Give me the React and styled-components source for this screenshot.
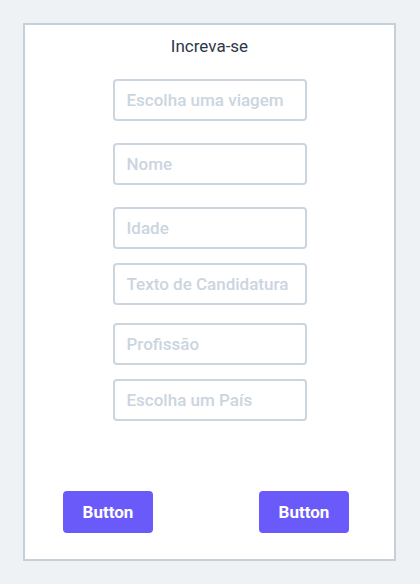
import styled, { createGlobalStyle } from "styled-components";

const GlobalStyle = createGlobalStyle`
  body {
    margin: 0;
    background-color: #eff2f5;
    font-family: Roboto, "Liberation Sans", sans-serif;
  }
`;

const Page = styled.div`
  padding: 23px;
`;

const Card = styled.div`
  display: flex;
  flex-direction: column;
  align-items: center;
  box-sizing: border-box;
  width: 373px;
  height: 538px;
  background-color: #ffffff;
  border: 2px solid #c5d0db;
`;

const Title = styled.div`
  margin-top: 10px;
  font-size: 17px;
  line-height: 22px;
  color: #2d3748;
`;

const Form = styled.div`
  display: flex;
  flex-direction: column;
  margin-top: 22px;
`;

const Input = styled.input`
  box-sizing: border-box;
  width: 194px;
  height: 42px;
  margin-top: ${({ gap }) => gap}px;
  padding: 0 12px;
  border: 2px solid #cbd5e0;
  border-radius: 4px;
  font-family: Roboto, "Liberation Sans", sans-serif;
  font-size: 17px;
  font-weight: 500;
  color: #2d3748;
  outline: none;

  &::placeholder {
    color: #cbd5e0;
  }
`;

const ButtonRow = styled.div`
  display: flex;
  justify-content: space-between;
  align-self: stretch;
  margin-top: auto;
  margin-bottom: 26px;
  padding: 0 45px 0 38px;
`;

const Button = styled.button`
  width: 90px;
  height: 42px;
  border: none;
  border-radius: 4px;
  background-color: #6a5af9;
  color: #ffffff;
  font-family: Roboto, "Liberation Sans", sans-serif;
  font-size: 17px;
  font-weight: 700;
  cursor: pointer;
`;

const fields = [
  { placeholder: "Escolha uma viagem", gap: 0 },
  { placeholder: "Nome", gap: 22 },
  { placeholder: "Idade", gap: 22 },
  { placeholder: "Texto de Candidatura", gap: 14 },
  { placeholder: "Profissão", gap: 18 },
  { placeholder: "Escolha um País", gap: 14 },
];

const App = () => {
  return (
    <Page>
      <GlobalStyle />
      <Card>
        <Title>Increva-se</Title>
        <Form>
          {fields.map((f) => (
            <Input key={f.placeholder} placeholder={f.placeholder} gap={f.gap} />
          ))}
        </Form>
        <ButtonRow>
          <Button>Button</Button>
          <Button>Button</Button>
        </ButtonRow>
      </Card>
    </Page>
  );
};

export default App;
